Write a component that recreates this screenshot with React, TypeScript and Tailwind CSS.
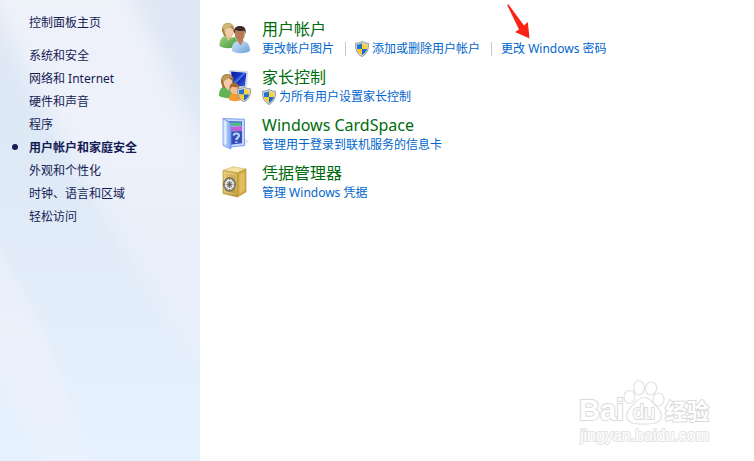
import { Fragment, type ReactNode } from "react";
import clsx from "clsx";

const navItems = [
  "系统和安全",
  "网络和 Internet",
  "硬件和声音",
  "程序",
  "用户帐户和家庭安全",
  "外观和个性化",
  "时钟、语言和区域",
  "轻松访问",
];
const activeItem = "用户帐户和家庭安全";

type Task = { label: string; shield?: boolean; pointed?: boolean };
type Category = { title: string; icon: ReactNode; tasks: Task[] };

function ShieldShape() {
  return (
    <>
      <path d="M7 .4C9 1.8 11 2.2 13.4 2.2c.3 5.8-.8 10.2-6.4 13.400C1.400 12.400.3 8 .6 2.200 3 2.200 5 1.800 7 .4Z" fill="#d5d9dc" stroke="#7b8187" strokeWidth=".8" />
      <path d="M7 2.200V8H2.100C1.900 6.500 1.900 5 2 3.500 4 3.500 5.500 3 7 2.200Z" fill="#2272cf" />
      <path d="M7 2.200V8h4.900c.2-1.500.2-3 .1-4.500C10 3.500 8.500 3 7 2.200Z" fill="#fcd535" />
      <path d="M7 8v6c-2.900-1.700-4.400-3.600-4.900-6Z" fill="#f8ca25" />
      <path d="M7 8v6c2.900-1.700 4.400-3.600 4.900-6Z" fill="#2169c4" />
    </>
  );
}

function ShieldIcon() {
  return (
    <svg viewBox="0 0 14 16" className="h-4 w-3.5 shrink-0" aria-hidden="true">
      <ShieldShape />
    </svg>
  );
}

function UsersIcon() {
  return (
    <svg viewBox="0 0 32 32" className="size-8" aria-hidden="true">
      <defs>
        <linearGradient id="greenShirt" x1="0" y1="0" x2="1" y2="1">
          <stop offset="0" stopColor="#9bd583" />
          <stop offset="1" stopColor="#45943b" />
        </linearGradient>
        <linearGradient id="blueShirt" x1="0" y1="0" x2="1" y2="1">
          <stop offset="0" stopColor="#d2e7fa" />
          <stop offset="1" stopColor="#6ba1d8" />
        </linearGradient>
      </defs>
      <path d="M.5 24c0-6 2-9.500 6-10l5 2 4-1c3 2 3 6 3 9-5 3-13 3-18 0Z" fill="url(#greenShirt)" />
      <path d="M6.500 13.500 9 19l4-4-1-3Z" fill="#e9b98e" />
      <path d="M3 9C2.500 4 5 1 9 1c4.500 0 6.500 3 6 8l-2 5H5Z" fill="#a98445" />
      <path d="M5.500 7.500 11 5l3 2.500c.5 4-1.500 8-4 8s-4.500-4-4.500-8Z" fill="#f2cba6" />
      <path d="M3.500 6C4 1 12-.5 14.500 4.500L11 4.200 5.500 8Z" fill="#d0b875" />
      <path d="M13 29c-.5-6 1.500-9 5.500-10h6c4 1 6.500 4 6.500 10-5 3-13 3-18 0Z" fill="url(#blueShirt)" />
      <path d="m18 18.500 3.500 5 3-5-1-3h-4Z" fill="#bd8058" />
      <ellipse cx="20.800" cy="12" rx="5" ry="6.800" fill="#b77b54" />
      <path d="M15.300 12c-1.200-6 1.700-8 5.600-8 4.200 0 6.800 2.500 5.500 8l-1.300-3.500c-2 .8-6 .7-8.300-.5Z" fill="#3c2a28" />
    </svg>
  );
}

function ParentalIcon() {
  return (
    <svg viewBox="0 0 32 32" className="size-8" aria-hidden="true">
      <defs>
        <linearGradient id="screen" x1="0" y1="0" x2="1" y2="1">
          <stop offset="0" stopColor="#081aa4" />
          <stop offset=".4" stopColor="#1436bd" />
          <stop offset=".52" stopColor="#4f86ee" />
          <stop offset=".56" stopColor="#0e2ab6" />
          <stop offset="1" stopColor="#466fe0" />
        </linearGradient>
      </defs>
      <path d="m10 0 19 1.500L27.500 17 13 18Z" fill="#dce4ee" stroke="#c3cbd8" strokeWidth=".5" />
      <path d="m12 1.500 15.300 1.200L26 16l-12 .8Z" fill="url(#screen)" />
      <path d="M0 26c0-6 2-8.500 5-9.500l5 2 4-1c2 2 3 6 3 9-5 2.500-12 2-17-.5Z" fill="#66b356" />
      <path d="M5.500 15 9 21l3-6Z" fill="#efc69f" />
      <path d="M2 12.500C1.500 7 4.500 4 8 4c4.500 0 7 3 6.300 8.500L12.500 18H4Z" fill="#9a7133" />
      <path d="M4.500 11 9.500 8l3.500 2.500c.5 4-1 8-4 8s-4.500-3.500-4.500-7.500Z" fill="#f4cba6" />
      <path d="M2.800 9C4 4 11.500 3 13.800 8L10 7.500l-5.500 4Z" fill="#bd985a" />
      <path d="M10 30c0-5 1.500-7 5-7s7 2 7 7c-3 1.500-9 1.500-12 0Z" fill="#f69b32" />
      <circle cx="15.500" cy="19.500" r="4.500" fill="#f3c191" />
      <path d="M11 19.500c-1.200-5.500 2-6.500 4.500-6.500s5.500 1.500 4.500 6.500L18.500 17c-2 .5-4 .4-5.500-.5Z" fill="#a5652f" />
      <g transform="translate(18 16.500)">
        <ShieldShape />
      </g>
    </svg>
  );
}

function CardSpaceIcon() {
  return (
    <svg viewBox="0 0 32 32" className="size-8" aria-hidden="true">
      <defs>
        <linearGradient id="leaf" x1="0" y1="0" x2="1" y2="0">
          <stop offset="0" stopColor="#e6f0ff" />
          <stop offset=".5" stopColor="#a5c5fa" />
          <stop offset="1" stopColor="#7ba6ef" />
        </linearGradient>
      </defs>
      <path d="m25 20 5.500 3-6 6-4-1Z" fill="#ececee" />
      <path d="m4 .500 21.500.8v26.200L12 29Z" fill="#c5d8fb" stroke="#6b91ef" strokeWidth=".8" />
      <path d="m9 3 14 .5v4.300L11 7.500Z" fill="#3f6fd0" />
      <path d="m12 4.500 10 .2v3L12 7.500Z" fill="#4fc178" />
      <path d="m11 8.500 12-.2v4.600L11 13.500Z" fill="#c060d9" />
      <path d="m11 13.500 12-.6v12.300l-12 1.500Z" fill="#3450b8" />
      <path d="M14.500 17.500c.5-2.500 5.500-2.800 5.500 0 0 2-2.500 2.300-2.700 4.500M17.300 23.400V25" fill="none" stroke="#b7d1ff" strokeWidth="2.200" />
      <path d="m4 .500 8 4.500V31l-8-3.500Z" fill="url(#leaf)" stroke="#6c91ee" strokeWidth=".8" />
      <path d="m5.500 3 2 1v22l-2-.8Z" fill="#f3f8ff" opacity=".7" />
    </svg>
  );
}

function VaultIcon() {
  return (
    <svg viewBox="0 0 32 32" className="size-8" aria-hidden="true">
      <defs>
        <linearGradient id="brass" x1="0" y1="0" x2="1" y2="1">
          <stop offset="0" stopColor="#e8cf76" />
          <stop offset="1" stopColor="#b68a28" />
        </linearGradient>
      </defs>
      <path d="M4 4.500 14 .800 27 3 18.500 7Z" fill="#f3e3a0" stroke="#cfae5a" strokeWidth=".6" />
      <path d="m4 4.500 14.500 2.500v24L4 27.500Z" fill="url(#brass)" stroke="#b8923c" strokeWidth=".7" />
      <path d="M18.500 7 27 3v23l-8.500 5Z" fill="#cfa943" stroke="#b8923c" strokeWidth=".7" />
      <path d="m20.500 8.500 5-2.500v18.500l-5 3Z" fill="#dfbf62" />
      <path d="m5.500 6.500 11.500 2v19.800L5.500 25.800Z" fill="none" stroke="#ecd88d" strokeWidth=".7" />
      <ellipse cx="10.500" cy="18.500" rx="5.800" ry="6.600" fill="#c2c0b8" stroke="#6b6759" strokeWidth="1.200" />
      <path d="m6.500 14 8 9M14.500 14l-8 9M10.500 12v13M4.700 18.500h11.600" stroke="#75736c" strokeWidth="1" />
      <ellipse cx="10.500" cy="18.500" rx="3.600" ry="4.200" fill="none" stroke="#f0f0ee" strokeWidth="1.200" />
      <circle cx="10.500" cy="18.500" r="1.400" fill="#66645d" />
    </svg>
  );
}

const categories: Category[] = [
  {
    title: "用户帐户",
    icon: <UsersIcon />,
    tasks: [
      { label: "更改帐户图片" },
      { label: "添加或删除用户帐户", shield: true },
      { label: "更改 Windows 密码", pointed: true },
    ],
  },
  { title: "家长控制", icon: <ParentalIcon />, tasks: [{ label: "为所有用户设置家长控制", shield: true }] },
  { title: "Windows CardSpace", icon: <CardSpaceIcon />, tasks: [{ label: "管理用于登录到联机服务的信息卡" }] },
  { title: "凭据管理器", icon: <VaultIcon />, tasks: [{ label: "管理 Windows 凭据" }] },
];

// soft diagonal light rays behind the navigation
function SidebarRays() {
  return (
    <svg viewBox="0 0 200 461" preserveAspectRatio="none" className="absolute inset-0 -z-10 size-full" aria-hidden="true">
      <defs>
        <linearGradient id="sky" x1="0" y1="0" x2="0" y2="1">
          <stop offset="0" stopColor="#dfe8f5" />
          <stop offset=".3" stopColor="#dee9f6" />
          <stop offset=".55" stopColor="#e1ecf8" />
          <stop offset="1" stopColor="#e6f2fe" />
        </linearGradient>
        <linearGradient id="ray" x1="0" y1="0" x2="0" y2="1">
          <stop offset="0" stopColor="#eff2f9" />
          <stop offset=".4" stopColor="#ecf1fa" />
          <stop offset=".7" stopColor="#e8effa" />
          <stop offset="1" stopColor="#e6f1fd" />
        </linearGradient>
        <linearGradient id="lowRay" x1="0" y1="0" x2="0" y2="1">
          <stop offset="0" stopColor="#e8eff9" />
          <stop offset=".5" stopColor="#ebf1fc" />
          <stop offset="1" stopColor="#e8f2fe" />
        </linearGradient>
        <filter id="soft" x="-30%" y="-20%" width="160%" height="140%">
          <feGaussianBlur stdDeviation="9" />
        </filter>
        <filter id="edge" x="-30%" y="-20%" width="160%" height="140%">
          <feGaussianBlur stdDeviation="4" />
        </filter>
      </defs>
      <rect width="200" height="461" fill="url(#sky)" />
      <path d="M-20-30H120L170 80 240 210V420L200 370 115 230 50 120-8 0Z" fill="url(#ray)" filter="url(#soft)" />
      <path d="M-20 215 40 325 100 480H50L-20 340Z" fill="url(#lowRay)" filter="url(#edge)" />
    </svg>
  );
}

function Watermark() {
  return (
    <svg viewBox="0 0 140 70" className="pointer-events-none absolute right-9 bottom-3.5 h-[70px] w-[140px]" role="img" aria-label="Baidu 经验">
      <g fill="#fff" stroke="#e2e2e2" strokeWidth="1.200">
        <ellipse cx="51.500" cy="20" rx="5.500" ry="6.500" />
        <ellipse cx="61" cy="10.700" rx="5.300" ry="7.200" />
        <ellipse cx="73" cy="11.500" rx="5.600" ry="6.500" transform="rotate(10 73 11.500)" />
        <ellipse cx="80.500" cy="22.500" rx="5.500" ry="6.500" />
        <path d="M66 20.500c6 0 8.500 5 13 9.500 7 6.500 5 15.500-4 16.500-4 .5-14 .5-18 0-9-1-11-10-4-16.500 5-4.500 7-9.500 13-9.500Z" />
      </g>
      <g fill="#fff" stroke="#dadada" strokeWidth="2" paintOrder="stroke" strokeLinejoin="round">
        <text x="1" y="43" fontSize="29" fontWeight="700" className="font-['Liberation_Sans',sans-serif]">Bai</text>
        <text x="55" y="42" fontSize="20" className="font-['Liberation_Sans',sans-serif]">du</text>
        <text x="87" y="42" fontSize="22" fontWeight="700" className="font-['Noto_Sans_CJK_SC',sans-serif]">经验</text>
        <text x="2" y="64" fontSize="16" stroke="#e4e4e4" className="font-['Liberation_Sans',sans-serif]">jingyan.baidu.com</text>
      </g>
    </svg>
  );
}

function PointerArrow() {
  return (
    <svg viewBox="0 0 26 36" className="absolute bottom-[18px] left-1 h-9 w-[26px]" aria-hidden="true">
      <path d="M2 .8 3.500.5 19 21.500 22.800 18 24.500 34.500 10 28 14 25.500Z" fill="#fb2314" />
    </svg>
  );
}

export default function App() {
  return (
    <div className="relative flex min-h-screen bg-white font-['Noto_Sans','Noto_Sans_CJK_SC',sans-serif] text-xs">
      <aside className="relative isolate w-[200px] shrink-0 overflow-hidden px-[29px] pt-[11px] text-[#151c55]">
        <SidebarRays />
        <a href="#" className="block leading-[23px]">控制面板主页</a>
        <nav className="mt-2.5">
          <ul>
            {navItems.map((item) => (
              <li key={item} className="relative leading-[23px] whitespace-nowrap">
                {item === activeItem && (
                  <span className="absolute top-2 -left-[17px] size-1.5 rounded-full bg-[#151c55]" />
                )}
                <a href="#" className={clsx(item === activeItem && "font-bold")}>{item}</a>
              </li>
            ))}
          </ul>
        </nav>
      </aside>

      <main className="flex min-w-0 flex-1 flex-col gap-[9px] pt-[19px] pl-[19px]">
        {categories.map((cat) => (
          <section key={cat.title} className="flex gap-[11px]">
            <div className="w-8 shrink-0 pt-[3px]">{cat.icon}</div>
            <div className="whitespace-nowrap">
              <h2 className="mb-px text-base leading-5 text-[#006b0c]">
                <a href="#">{cat.title}</a>
              </h2>
              <div className="flex h-[18px] items-center text-[#0066cc]">
                {cat.tasks.map((task, i) => (
                  <Fragment key={task.label}>
                    {i > 0 && <span className="mr-[9px] ml-[11px] h-3.5 w-px bg-[#c8c8c8]" />}
                    <a href="#" className="relative flex items-center gap-[3px] leading-[18px] hover:underline">
                      {task.shield && <ShieldIcon />}
                      {task.label}
                      {task.pointed && <PointerArrow />}
                    </a>
                  </Fragment>
                ))}
              </div>
            </div>
          </section>
        ))}
      </main>

      <Watermark />
    </div>
  );
}
